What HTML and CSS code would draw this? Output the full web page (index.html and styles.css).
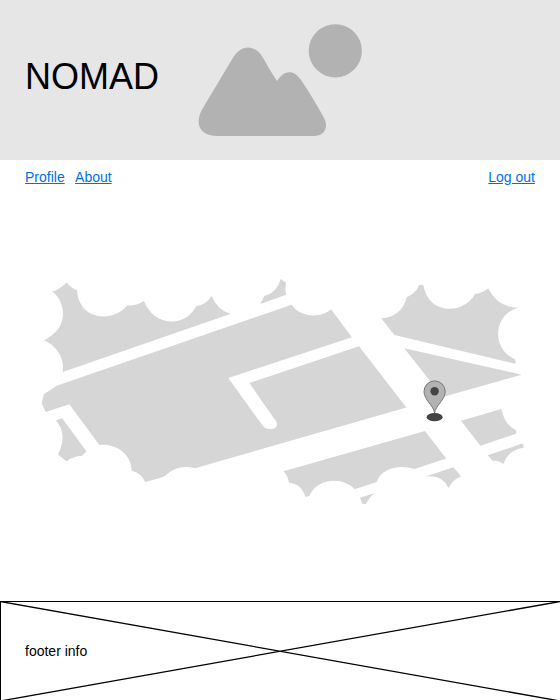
FILE: index.html
```html
<!DOCTYPE html>
<html lang="en">
<head>
<meta charset="utf-8">
<title>Nomad</title>
<link rel="stylesheet" href="styles.css">
</head>
<body>
<header class="hero">
  <h1 class="brand">NOMAD</h1>
  <svg class="landscape" viewBox="190 20 180 120" aria-hidden="true">
    <path d="M201.700 110L232.700 58.300C241 43.800 255 43.800 263.300 58.300Q269 69 277 81C284 69.500 294 69.500 301 80Q312 96 323.300 116.700C329.500 126.500 324.500 136 314 136H218C200 136 194.500 124.500 201.700 110Z"/>
    <circle cx="335.300" cy="50.800" r="26.600"/>
  </svg>
</header>
<nav class="nav">
  <div class="links"><a href="#">Profile</a><a href="#">About</a></div>
  <a href="#">Log out</a>
</nav>
<main>
  <svg class="map" viewBox="0 194 560 407" aria-label="Map">
    <g class="land">
      <path d="M66.700 282.400Q59 290 52 291.500C66.500 302 66.500 325 53 334Q48 339 43.700 340.200C56 345 65 358 62.700 371.900L230.900 313.700Q218 311 211.700 296Q206 305 196 306.300C186 327.500 154 327.500 144 301Q136 306 127.300 305.500C112 323.500 78.500 320 77 290Q71 288 66.700 282.400Z"/>
      <path d="M280.700 279L286 282.700Q284.500 289 286.200 294.700L260.300 303.900L264.300 296Q277 293 280.700 279Z"/>
      <path d="M56.700 385.800L291.700 304.700C300 317.500 321 318.500 331 309.300L351.900 337.200L228.300 378L261.700 424.300C265 429 267 429 271 429C275 429 278.500 426 276.500 422L249.300 383L359 346.300L406.400 407.500L195 468.300C184 465 173 468 165 476L160 478L145.300 482Q141 473 131.700 470.700C131 453 115 443 99.300 445L69.300 404.300L45.700 412L41.700 403.300L44 394Z"/>
      <path d="M56 420.300L62.300 418.300L86.500 451.500L81.700 456Q73 456 66.700 461.500L58 454.500Q68 435 56 420.300Z"/>
      <path d="M419.300 284.700L423.500 285.300C428 314.500 463 315.500 475 294Q483 293 488.200 288.300Q498 308 518.500 307.500C493 314.500 491 349 515 359.300L515.800 363.800L394.300 335L381.300 318.300C393 318.500 404 310 406.700 297.300Q416 293 419.300 284.700Z"/>
      <path d="M404.300 348.300L521.800 374.700L442.700 397Z"/>
      <path d="M461 420.700L501.500 409Q504 424 516.200 430.300V433.700L480.400 445.800Z"/>
      <path d="M487.700 455.300L522 443.600Q524 443.500 523.500 447.700Q508 450 503.300 464Q498 460 492.700 460.900Z"/>
      <path d="M283.500 471.300L425 431L446.200 458.400L414.300 469C400 464 381 468 376.700 482L354.700 489.300C343 476.500 317 477.500 309.300 496L305.300 497Q302 484 289 482.700Q288 476 283.500 471.300Z"/>
      <path d="M360 497.700L375 493Q368.500 498 366 504L362.300 503.700Z"/>
      <path d="M425 476.700L453.300 467.300L461.200 476.400Q452 480 448.500 487.900Q442 474 425 476.700Z"/>
    </g>
    <ellipse class="pin-dark" cx="434.600" cy="417.200" rx="8" ry="4.100"/>
    <path class="pin" d="M434.600 413C434 406 424 400 424 391.500A10.600 10.600 0 0 1 445.200 391.500C445.200 400 435.200 406 434.600 413Z"/>
    <circle class="pin-dark" cx="434.600" cy="391.200" r="4.200"/>
  </svg>
</main>
<footer class="footer">
  <svg class="cross" viewBox="0 0 560 100" aria-hidden="true">
    <path d="M0 .5H560M.5 0V100"/>
    <path class="diagonals" d="M.5.5L560 100M.5 100L560 .5"/>
  </svg>
  <span class="info">footer info</span>
</footer>
</body>
</html>
```
FILE: styles.css
```css
* { box-sizing: border-box; }
body {
  margin: 0;
  height: 700px;
  overflow: hidden;
  display: flex;
  flex-direction: column;
  background: #fff;
  color: #000;
  font: 14px/16px "Liberation Sans", Arial, sans-serif;
}
.hero {
  height: 160px;
  flex: none;
  display: flex;
  padding: 20px 25px;
  background: #e6e6e6;
}
.brand {
  width: 165px;
  margin: 36px 0 0;
  font-size: 36px;
  line-height: 41px;
  font-weight: 400;
}
.landscape { width: 180px; height: 120px; fill: #b2b2b2; }
.nav {
  height: 34px;
  flex: none;
  display: flex;
  justify-content: space-between;
  padding: 9px 25px;
}
.links { display: flex; gap: 10.400px; }
a { color: #0070e8; }
main { height: 407px; flex: none; }
.map { display: block; width: 560px; height: 407px; }
.land { fill: #d6d6d6; }
.pin { fill: #b2b2b2; stroke: #777; stroke-width: 1; }
.pin-dark { fill: #434343; }
.footer {
  position: relative;
  height: 99px;
  flex: none;
  display: flex;
  align-items: center;
  padding: 0 25px;
}
.cross {
  position: absolute;
  left: 0;
  top: 0;
  width: 560px;
  height: 100px;
  fill: none;
  stroke: #000;
}
.diagonals { stroke-width: 1.300; }
.info { position: relative; }
```
